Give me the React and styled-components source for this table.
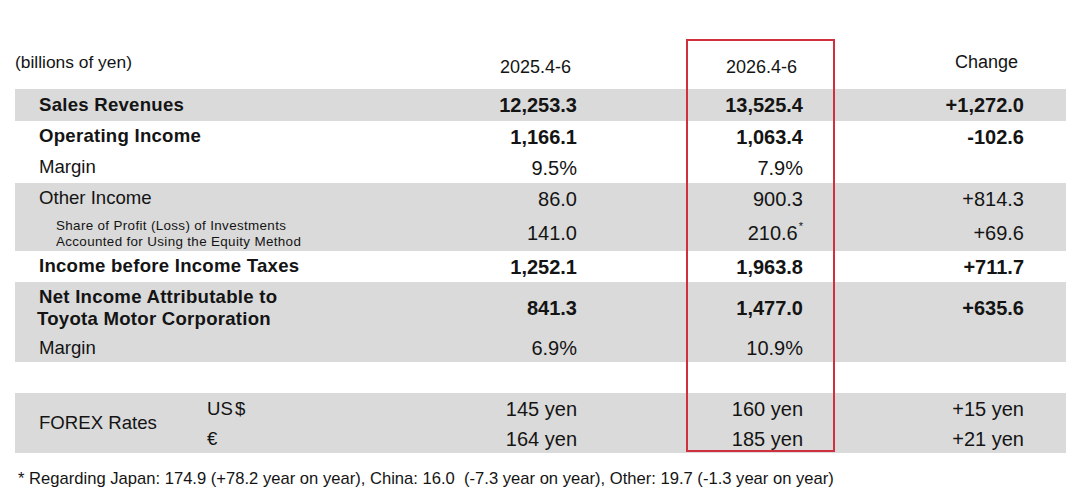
import React from "react";
import styled, { createGlobalStyle } from "styled-components";

const Global = createGlobalStyle`
  html, body { margin: 0; padding: 0; background: #ffffff; }
  body { font-family: "Liberation Sans", Arial, sans-serif; color: #141414; }
`;

const COLS = "405px 157px 226px 221px 42px";
const GREY = "#dadada";

const Page = styled.div`
  position: relative;
  width: 1080px;
  height: 497px;
  box-sizing: border-box;
  padding-left: 15px;
  overflow: hidden;
`;

const Header = styled.div`
  display: grid;
  grid-template-columns: ${COLS};
  align-items: start;
  height: 89px;
  box-sizing: border-box;
  padding-top: 52px;
`;

const HeadCell = styled.div`
  font-size: ${(p) => (p.$unit ? "17.4px" : "18px")};
  line-height: 20px;
  text-align: ${(p) => (p.$unit ? "left" : "right")};
  padding-right: ${(p) => (p.$unit ? "0" : "6px")};
  margin-top: ${(p) => (p.$low ? "5px" : "0")};
  white-space: nowrap;
`;

const Table = styled.div`
  width: 1051px;
  display: flex;
  flex-direction: column;
`;

const Band = styled.div`
  background: ${(p) => (p.$grey ? GREY : "transparent")};
  display: flex;
  flex-direction: column;
`;

const Row = styled.div`
  display: grid;
  grid-template-columns: ${COLS};
  align-items: center;
  height: ${(p) => p.$h}px;
`;

const Label = styled.div`
  font-size: 18.6px;
  font-weight: ${(p) => (p.$bold ? 700 : 400)};
  letter-spacing: ${(p) => (p.$bold ? "0.25px" : "0")};
  line-height: 22.5px;
  padding-left: 24px;
  white-space: nowrap;
`;

const TwoLineLabel = styled(Label)`
  padding-left: 22px;
  text-indent: 2px;
  white-space: normal;
`;

const SubLabel = styled.div`
  font-size: 13.4px;
  letter-spacing: 0.35px;
  line-height: 16px;
  padding-left: 41px;
  padding-top: 2px;
  white-space: nowrap;
`;

const Value = styled.div`
  font-size: 20px;
  font-weight: ${(p) => (p.$bold ? 700 : 400)};
  text-align: right;
  white-space: nowrap;
  line-height: 22px;
`;

const Mark = styled.sup`
  font-size: 11px;
  position: relative;
  top: -2px;
  margin-left: 1px;
  vertical-align: super;
  line-height: 0;
`;

const ForexBand = styled.div`
  background: ${GREY};
  display: grid;
  grid-template-columns: 192px 213px 157px 226px 221px 42px;
  grid-template-rows: 32px 28px;
  align-items: center;
`;

const ForexLabel = styled.div`
  grid-column: 1;
  grid-row: 1 / span 2;
  font-size: 18.6px;
  padding-left: 24px;
  white-space: nowrap;
`;

const Currency = styled.div`
  grid-column: 2;
  grid-row: ${(p) => p.$row};
  font-size: 18.6px;
  word-spacing: -3px;
  white-space: nowrap;
`;

const ForexValue = styled(Value)`
  grid-column: ${(p) => p.$col};
  grid-row: ${(p) => p.$row};
`;

const Spacer = styled.div`
  height: 31px;
`;

const Footnote = styled.div`
  margin-top: 16px;
  padding-left: 3px;
  font-size: 16.6px;
  line-height: 20px;
  white-space: pre;
`;

const Highlight = styled.div`
  position: absolute;
  left: 686px;
  top: 39px;
  width: 149px;
  height: 413px;
  box-sizing: border-box;
  border: 2px solid #d0303d;
  pointer-events: none;
`;

export default function App() {
  return (
    <>
      <Global />
      <Page>
        <Header>
          <HeadCell $unit>(billions of yen)</HeadCell>
          <HeadCell $low>2025.4-6</HeadCell>
          <HeadCell $low>2026.4-6</HeadCell>
          <HeadCell>Change</HeadCell>
        </Header>
        <Table>
          <Band $grey>
            <Row $h={32}>
              <Label $bold>Sales Revenues</Label>
              <Value $bold>12,253.3</Value>
              <Value $bold>13,525.4</Value>
              <Value $bold>+1,272.0</Value>
            </Row>
          </Band>
          <Band>
            <Row $h={31}>
              <Label $bold>Operating Income</Label>
              <Value $bold>1,166.1</Value>
              <Value $bold>1,063.4</Value>
              <Value $bold>-102.6</Value>
            </Row>
            <Row $h={31}>
              <Label>Margin</Label>
              <Value>9.5%</Value>
              <Value>7.9%</Value>
              <Value />
            </Row>
          </Band>
          <Band $grey>
            <Row $h={31}>
              <Label>Other Income</Label>
              <Value>86.0</Value>
              <Value>900.3</Value>
              <Value>+814.3</Value>
            </Row>
            <Row $h={37}>
              <SubLabel>
                Share of Profit (Loss) of Investments
                <br />
                Accounted for Using the Equity Method
              </SubLabel>
              <Value>141.0</Value>
              <Value>
                210.6<Mark>*</Mark>
              </Value>
              <Value>+69.6</Value>
            </Row>
          </Band>
          <Band>
            <Row $h={31}>
              <Label $bold>Income before Income Taxes</Label>
              <Value $bold>1,252.1</Value>
              <Value $bold>1,963.8</Value>
              <Value $bold>+711.7</Value>
            </Row>
          </Band>
          <Band $grey>
            <Row $h={52}>
              <TwoLineLabel $bold>
                Net Income Attributable to
                <br />
                Toyota Motor Corporation
              </TwoLineLabel>
              <Value $bold>841.3</Value>
              <Value $bold>1,477.0</Value>
              <Value $bold>+635.6</Value>
            </Row>
            <Row $h={28}>
              <Label>Margin</Label>
              <Value>6.9%</Value>
              <Value>10.9%</Value>
              <Value />
            </Row>
          </Band>
          <Spacer />
          <ForexBand>
            <ForexLabel>FOREX Rates</ForexLabel>
            <Currency $row={1}>US $</Currency>
            <ForexValue $row={1} $col={3}>145 yen</ForexValue>
            <ForexValue $row={1} $col={4}>160 yen</ForexValue>
            <ForexValue $row={1} $col={5}>+15 yen</ForexValue>
            <Currency $row={2}>€</Currency>
            <ForexValue $row={2} $col={3}>164 yen</ForexValue>
            <ForexValue $row={2} $col={4}>185 yen</ForexValue>
            <ForexValue $row={2} $col={5}>+21 yen</ForexValue>
          </ForexBand>
        </Table>
        <Footnote>
          {"* Regarding Japan: 174.9 (+78.2 year on year), China: 16.0  (-7.3 year on year), Other: 19.7 (-1.3 year on year)"}
        </Footnote>
        <Highlight />
      </Page>
    </>
  );
}
